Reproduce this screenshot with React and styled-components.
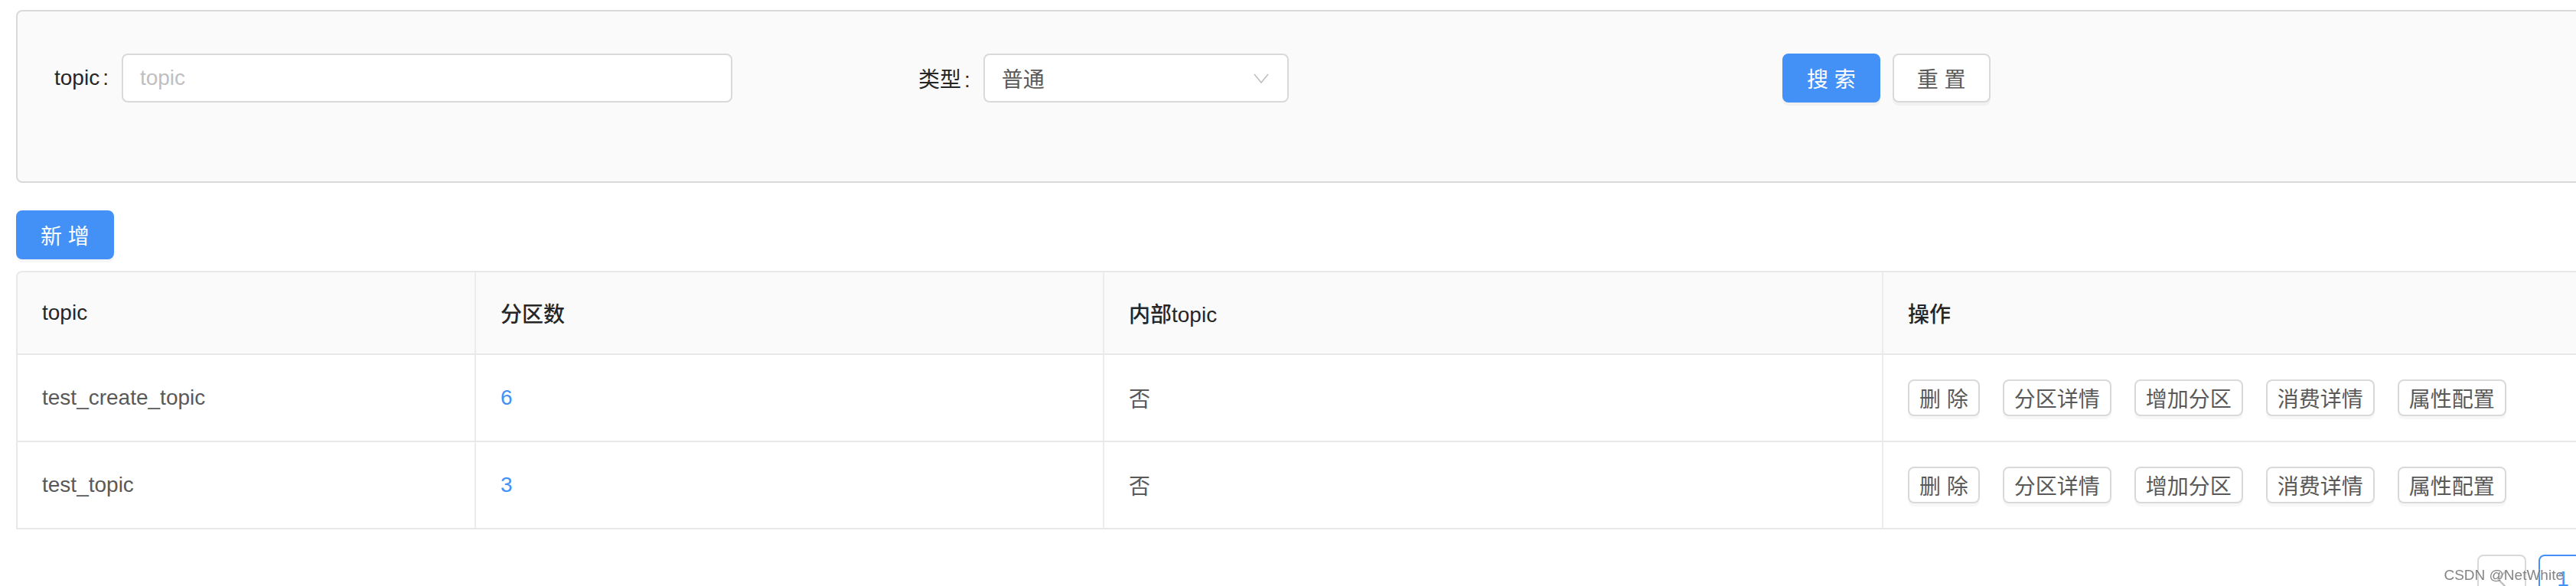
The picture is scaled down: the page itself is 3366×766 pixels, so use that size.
import React from 'react';
import styled, { createGlobalStyle } from 'styled-components';

const BLUE = '#4391f7';

const rows = [
  { topic: 'test_create_topic', partitions: 6, internal: '否' },
  { topic: 'test_topic', partitions: 3, internal: '否' },
];

const actions = ['删 除', '分区详情', '增加分区', '消费详情', '属性配置'];

function ChevronDown() {
  return (
    <svg width="20" height="13" viewBox="0 0 20 13">
      <path d="M1 1 L10 12 L19 1" fill="none" stroke="#bfbfbf" strokeWidth="1.6" />
    </svg>
  );
}

function Chevron({ left }) {
  return (
    <svg width="16" height="24" viewBox="0 0 16 24">
      <path
        d={left ? 'M13 2 L3 12 L13 22' : 'M3 2 L13 12 L3 22'}
        fill="none"
        stroke="#bfbfbf"
        strokeWidth="2.4"
      />
    </svg>
  );
}

function App() {
  return (
    <Page>
      <GlobalStyle />

      {/* search form */}
      <SearchPanel>
        <FormRow>
          <FormItem>
            <Label>topic</Label>
            <TextInput placeholder="topic" width={798} />
          </FormItem>
          <FormItem>
            <Label>类型</Label>
            <SelectBox>
              <span>普通</span>
              <ChevronDown />
            </SelectBox>
          </FormItem>
          <ButtonGroup>
            <Button primary wide>搜 索</Button>
            <Button wide>重 置</Button>
          </ButtonGroup>
        </FormRow>
      </SearchPanel>

      <Toolbar>
        <Button primary wide>新 增</Button>
      </Toolbar>

      {/* table */}
      <Table>
        <TableRow header>
          <Cell header>topic</Cell>
          <Cell header>分区数</Cell>
          <Cell header>内部topic</Cell>
          <Cell header last>操作</Cell>
        </TableRow>
        {rows.map((row) => (
          <TableRow key={row.topic}>
            <Cell>{row.topic}</Cell>
            <Cell><Link>{row.partitions}</Link></Cell>
            <Cell>{row.internal}</Cell>
            <Cell last>
              <Actions>
                {actions.map((a) => (
                  <SmallButton key={a}>{a}</SmallButton>
                ))}
              </Actions>
            </Cell>
          </TableRow>
        ))}
      </Table>

      <Pagination>
        <PageItem><Chevron left /></PageItem>
        <PageItem active>1</PageItem>
        <PageItem><Chevron /></PageItem>
      </Pagination>

      <Watermark>CSDN @NetWhite</Watermark>
    </Page>
  );
}

export default App;

//Styled Components
const GlobalStyle = createGlobalStyle`
  html, body {
    margin: 0;
    padding: 0;
    overflow: hidden;
    background: #fff;
  }
  body {
    font-family: "Liberation Sans", "Noto Sans CJK SC", sans-serif;
    font-size: 28px;
    color: #595959;
  }
  * { box-sizing: border-box; }
`;

const Page = styled.div`
  width: 3461px;
  padding: 13px 0 0 21px;
`;

const SearchPanel = styled.div`
  background: #fafafa;
  border: 2px solid #d9d9d9;
  border-radius: 8px;
  padding: 55px 0 103px 48px;
`;

const FormRow = styled.div`
  display: grid;
  grid-template-columns: repeat(3, 1129px);
  align-items: center;
  height: 64px;
`;

const FormItem = styled.div`
  display: flex;
  align-items: center;
`;

const Label = styled.label`
  color: #262626;
  font-size: 28px;
  white-space: nowrap;

  &::after {
    content: ':';
    margin: 0 17px 0 4px;
  }
`;

const TextInput = styled.input`
  width: ${(p) => p.width}px;
  height: 64px;
  border: 2px solid #d9d9d9;
  border-radius: 8px;
  background: #fff;
  padding: 0 22px;
  font: inherit;
  font-size: 28px;
  color: #595959;
  outline: none;

  &::placeholder {
    color: #bfbfbf;
  }
`;

const SelectBox = styled.div`
  width: 399px;
  height: 64px;
  border: 2px solid #d9d9d9;
  border-radius: 8px;
  background: #fff;
  padding: 0 24px 0 22px;
  display: flex;
  align-items: center;
  justify-content: space-between;
  color: #595959;
`;

const ButtonGroup = styled.div`
  display: flex;
  gap: 16px;
`;

const Button = styled.button`
  height: 64px;
  padding: 0 ${(p) => (p.wide ? 30 : 14)}px;
  border-radius: 8px;
  font-family: inherit;
  font-size: 28px;
  cursor: pointer;
  white-space: nowrap;
  border: 2px solid ${(p) => (p.primary ? BLUE : '#d9d9d9')};
  background: ${(p) => (p.primary ? BLUE : '#fff')};
  color: ${(p) => (p.primary ? '#fff' : '#595959')};
  box-shadow: 0 4px 0 rgba(0, 0, 0, 0.035);
`;

const Toolbar = styled.div`
  margin: 36px 0 15px;
`;

const Table = styled.div`
  border: 2px solid #e8e8e8;
  border-bottom: none;
  border-radius: 8px 8px 0 0;
  overflow: hidden;
`;

const TableRow = styled.div`
  display: grid;
  grid-template-columns: 599px 821px 1018px 1fr;
  height: ${(p) => (p.header ? 108 : 114)}px;
  background: ${(p) => (p.header ? '#fafafa' : '#fff')};
  border-bottom: 2px solid #e8e8e8;
`;

const Cell = styled.div`
  display: flex;
  align-items: center;
  padding: 0 32px;
  border-right: ${(p) => (p.last ? 'none' : '2px solid #ececec')};
  color: ${(p) => (p.header ? '#262626' : '#595959')};
  font-weight: ${(p) => (p.header ? 500 : 400)};
  white-space: nowrap;
`;

const Link = styled.a`
  color: ${BLUE};
  cursor: pointer;
`;

const Actions = styled.div`
  display: flex;
  gap: 30px;
`;

const SmallButton = styled.button`
  height: 48px;
  padding: 0 13px;
  border: 2px solid #d9d9d9;
  border-radius: 8px;
  background: #fff;
  color: #595959;
  font-family: inherit;
  font-size: 28px;
  white-space: nowrap;
  box-shadow: 0 4px 0 rgba(0, 0, 0, 0.03);
`;

const Pagination = styled.div`
  display: flex;
  justify-content: flex-end;
  gap: 16px;
  margin-top: 33px;
`;

const PageItem = styled.div`
  width: 64px;
  height: 64px;
  display: flex;
  align-items: center;
  justify-content: center;
  border: 2px solid ${(p) => (p.active ? BLUE : '#d9d9d9')};
  border-radius: 8px;
  color: ${(p) => (p.active ? BLUE : '#595959')};
  background: #fff;
`;

const Watermark = styled.div`
  position: fixed;
  right: 16px;
  bottom: 5px;
  font-family: "Liberation Sans", sans-serif;
  font-size: 19px;
  line-height: 1;
  color: rgba(90, 90, 90, 0.75);
  text-shadow: 0 0 2px #fff;
`;
